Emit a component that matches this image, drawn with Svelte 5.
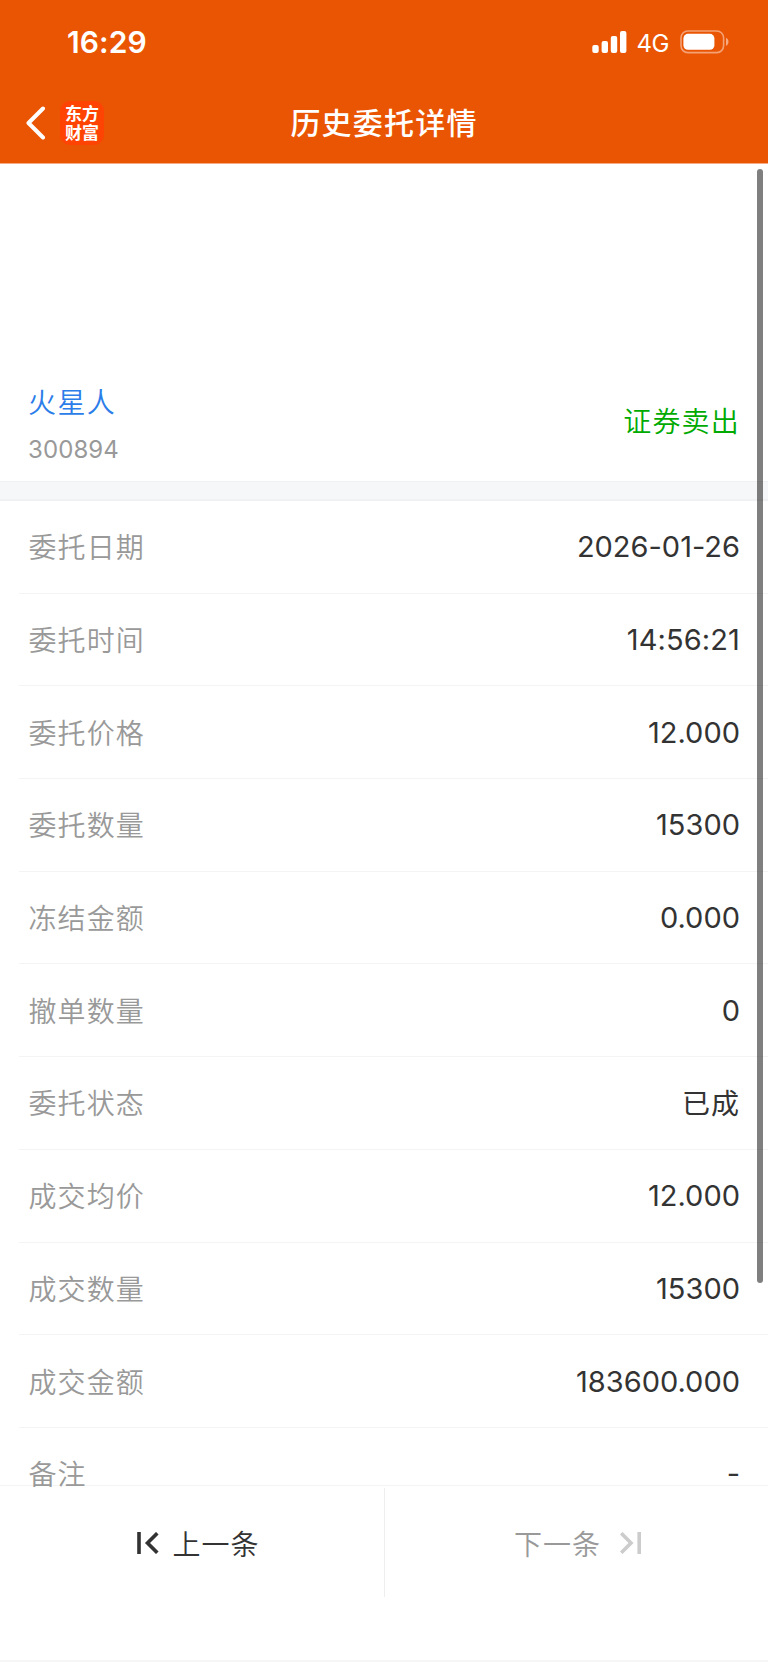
<script lang="ts">
  type Row = { label: string, value: string, kind?: "clock" | "word" };

  const stock = { name: "火星人", code: "300894", action: "证券卖出" };

  const rows: Row[] = [
    { label: "委托日期", value: "2026-01-26" },
    { label: "委托时间", value: "14:56:21", kind: "clock" },
    { label: "委托价格", value: "12.000" },
    { label: "委托数量", value: "15300" },
    { label: "冻结金额", value: "0.000" },
    { label: "撤单数量", value: "0" },
    { label: "委托状态", value: "已成", kind: "word" },
    { label: "成交均价", value: "12.000" },
    { label: "成交数量", value: "15300" },
    { label: "成交金额", value: "183600.000" },
    { label: "备注", value: "-" },
  ];
</script>

<div class="screen">
  <header>
    <div class="status">
      <span class="time">16:29</span>
      <div class="indicators">
        <svg class="signal" width="35" height="22" viewBox="0 0 35 22" fill="#fff">
          <rect x="0.3" y="14" width="6.4" height="8" rx="2" />
          <rect x="9.6" y="10" width="6.4" height="12" rx="2" />
          <rect x="18.8" y="5" width="6.4" height="17" rx="2" />
          <rect x="28" y="0" width="6.4" height="22" rx="2" />
        </svg>
        <span class="network">4G</span>
        <svg class="battery" width="50" height="24" viewBox="0 0 50 24">
          <rect x="1" y="1" width="42.6" height="21.6" rx="6.8" fill="none" stroke="#fff" stroke-opacity=".45" stroke-width="1.6" />
          <rect x="3.4" y="3.8" width="31" height="16" rx="4.6" fill="#fff" />
          <path d="M46 7.8c1.5.6 2.5 2.2 2.5 4s-1 3.4-2.5 4z" fill="#fff" fill-opacity=".5" />
        </svg>
      </div>
    </div>
    <nav>
      <div class="side">
        <svg class="back" width="20" height="34" viewBox="0 0 20 34" fill="none" stroke="#fff" stroke-width="4" stroke-linecap="round" stroke-linejoin="round">
          <path d="M17 2.500L2.500 17l14.500 14.500" />
        </svg>
        <div class="logo">东方<br>财富</div>
      </div>
      <h1>历史委托详情</h1>
      <div class="side"></div>
    </nav>
  </header>

  <main>
    <section class="stock">
      <div>
        <div class="name">{stock.name}</div>
        <div class="code">{stock.code}</div>
      </div>
      <div class="action">{stock.action}</div>
    </section>
    <div class="divider"></div>
    <section class="rows">
      {#each rows as row}
        <div class="row">
          <span class="label">{row.label}</span>
          <span class="value {row.kind ?? ''}">{row.value}</span>
        </div>
      {/each}
    </section>
    <div class="scrollbar"></div>
  </main>

  <footer>
    <button class="prev">
      <svg width="22" height="22" viewBox="0 0 22 22" fill="none" stroke="currentColor" stroke-width="3.6">
        <path d="M2 0v22M20.300 1.200L10.500 11l9.800 9.800" />
      </svg>
      <span>上一条</span>
    </button>
    <button class="next" disabled>
      <span>下一条</span>
      <svg width="22" height="22" viewBox="0 0 22 22" fill="none" stroke="#ccc" stroke-width="3.6">
        <path d="M1.200 1.200L11 11l-9.800 9.800M19.200 0v22" />
      </svg>
    </button>
  </footer>
</div>

<style>
  :global(body) {
    background: #fff;
  }
  .screen {
    width: 768px;
    height: 1663px;
    display: flex;
    flex-direction: column;
    overflow: hidden;
    background: #fff;
    color: #333;
    font-family: Inter, "Noto Sans CJK SC", sans-serif;
    font-size: 28px;
    font-weight: 350;
  }
  header {
    height: 164px;
    flex: none;
    background: #ea5504;
    color: #fff;
    border-bottom: 1px solid #f5ab84;
    box-sizing: border-box;
  }
  .status {
    height: 84px;
    display: flex;
    justify-content: space-between;
    align-items: center;
    padding: 0 38px 0 67px;
    box-sizing: border-box;
  }
  .time {
    font-size: 30px;
    font-weight: 590;
    letter-spacing: .1px;
  }
  .indicators {
    display: flex;
    align-items: center;
  }
  .network {
    margin: 2px 11px 0 10px;
    font-size: 24px;
    font-weight: 430;
    letter-spacing: -.5px;
  }
  nav {
    height: 78px;
    display: flex;
    align-items: center;
    justify-content: space-between;
  }
  .side {
    width: 200px;
    display: flex;
    align-items: center;
  }
  .back {
    margin-left: 26px;
  }
  .logo {
    width: 44px;
    height: 44px;
    margin-left: 14px;
    padding-top: 2px;
    border-radius: 10px;
    box-sizing: border-box;
    background: #ff4302;
    font-family: "Noto Sans CJK SC", sans-serif;
    font-size: 17px;
    font-weight: 700;
    line-height: 19px;
    text-align: center;
  }
  h1 {
    margin: 0;
    font-size: 30px;
    font-weight: 500;
    letter-spacing: 1.2px;
    line-height: 44px;
  }
  main {
    position: relative;
    height: 1323px;
    flex: none;
    overflow: hidden;
  }
  .stock {
    height: 317px;
    padding: 218px 28px 0 28px;
    box-sizing: border-box;
    display: flex;
    justify-content: space-between;
  }
  .name {
    color: #2b7de9;
    line-height: 42px;
    letter-spacing: 1.4px;
  }
  .code {
    margin-top: 11px;
    color: #999;
    font-size: 24px;
    font-weight: 400;
    line-height: 30px;
    letter-spacing: .1px;
  }
  .action {
    padding-top: 19px;
    color: #0a0;
    line-height: 42px;
    letter-spacing: 1.2px;
  }
  .divider {
    height: 20px;
    background: #f6f7f9;
    border: 1px solid #f0f1f2;
    border-bottom-width: 2px;
    border-left: none;
    border-right: none;
    box-sizing: border-box;
  }
  .row {
    height: 92.7px;
    margin-left: 19px;
    padding: 0 28px 0 9.5px;
    border-bottom: 1px solid #f4f4f4;
    box-sizing: border-box;
    display: flex;
    align-items: center;
    justify-content: space-between;
  }
  .label {
    margin-top: -1px;
    color: #999;
    letter-spacing: 1.1px;
  }
  .value {
    font-size: 29px;
    font-weight: 390;
    font-feature-settings: "calt" 0;

    &.clock {
      font-feature-settings: normal;
      letter-spacing: .1px;
    }

    &.word {
      margin-top: -2px;
      font-size: 28px;
      letter-spacing: 1px;
    }
  }
  .scrollbar {
    position: absolute;
    top: 5px;
    right: 5px;
    width: 6px;
    height: 1114px;
    border-radius: 3px;
    background: rgba(0, 0, 0, .5);
  }
  /* the last row runs slightly under the footer's top edge */
  footer {
    height: 177px;
    margin-top: -2px;
    flex: none;
    border-top: 1px solid #f4f4f4;
    border-bottom: 2px solid #f6f6f6;
    box-sizing: border-box;
    display: flex;
    align-items: flex-start;
  }
  button {
    width: 384px;
    height: 109px;
    margin-top: 2px;
    padding: 0;
    border: none;
    background: none;
    box-sizing: border-box;
    display: flex;
    align-items: center;
    justify-content: center;
    color: #333;
    font: inherit;
    letter-spacing: 1px;

    &>svg {
      margin-top: 1px;
    }
  }
  .prev {
    width: 385px;
    gap: 13px;
    padding-left: 13px;
    border-right: 1px solid #eee;
  }
  .next {
    width: 383px;
    gap: 19px;
    padding-left: 3px;
    color: #999;
  }
</style>
